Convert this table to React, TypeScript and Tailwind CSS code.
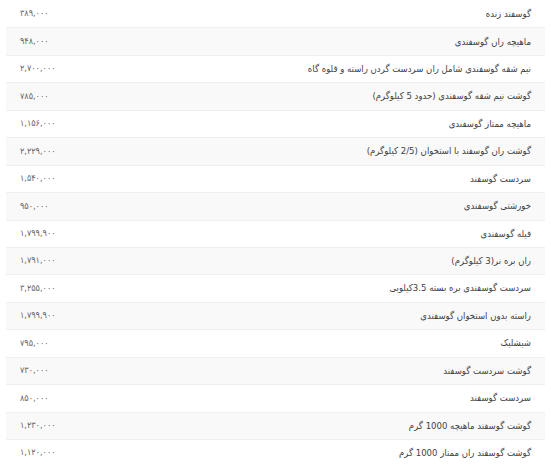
const rows: [string, string][] = [
  ["گوسفند زنده", "۳۸۹,۰۰۰"],
  ["ماهیچه ران گوسفندی", "۹۴۸,۰۰۰"],
  ["نیم شقه گوسفندی شامل ران سردست گردن راسته و قلوه گاه", "۲,۷۰۰,۰۰۰"],
  ["گوشت نیم شقه گوسفندی (حدود 5 کیلوگرم)", "۷۸۵,۰۰۰"],
  ["ماهیچه ممتاز گوسفندی", "۱,۱۵۶,۰۰۰"],
  ["گوشت ران گوسفند با استخوان (2/5 کیلوگرم)", "۲,۲۲۹,۰۰۰"],
  ["سردست گوسفند", "۱,۵۴۰,۰۰۰"],
  ["خورشتی گوسفندی", "۹۵۰,۰۰۰"],
  ["فیله گوسفندی", "۱,۷۹۹,۹۰۰"],
  ["ران بره نر(3 کیلوگرم)", "۱,۷۹۱,۰۰۰"],
  ["سردست گوسفندی بره بسته 3.5کیلویی", "۳,۲۵۵,۰۰۰"],
  ["راسته بدون استخوان گوسفندی", "۱,۷۹۹,۹۰۰"],
  ["شیشلیک", "۷۹۵,۰۰۰"],
  ["گوشت سردست گوسفند", "۷۳۰,۰۰۰"],
  ["سردست گوسفند", "۸۵۰,۰۰۰"],
  ["گوشت گوسفند ماهیچه 1000 گرم", "۱,۲۳۰,۰۰۰"],
  ["گوشت گوسفند ران ممتاز 1000 گرم", "۱,۱۲۰,۰۰۰"],
];

export default function App() {
  return (
    <div className="w-[551px] h-[474px] overflow-hidden bg-white">
      <div dir="rtl" className="mx-[6px] font-['DejaVu_Sans_Condensed','DejaVu_Sans',sans-serif] text-[#3f3f3f]">
        {rows.map(([name, price], i) => (
          <div
            key={i}
            className={`flex h-[27.44px] items-center justify-between px-[14px] ${
              i > 0 ? "border-t border-[#efefef]" : ""
            } ${i % 2 === 1 ? "bg-[#f9f9f9]" : "bg-white"}`}
          >
            <span className="text-[9.5px]">{name}</span>
            <span className="text-[9px] text-[#666]">{price}</span>
          </div>
        ))}
      </div>
    </div>
  );
}
